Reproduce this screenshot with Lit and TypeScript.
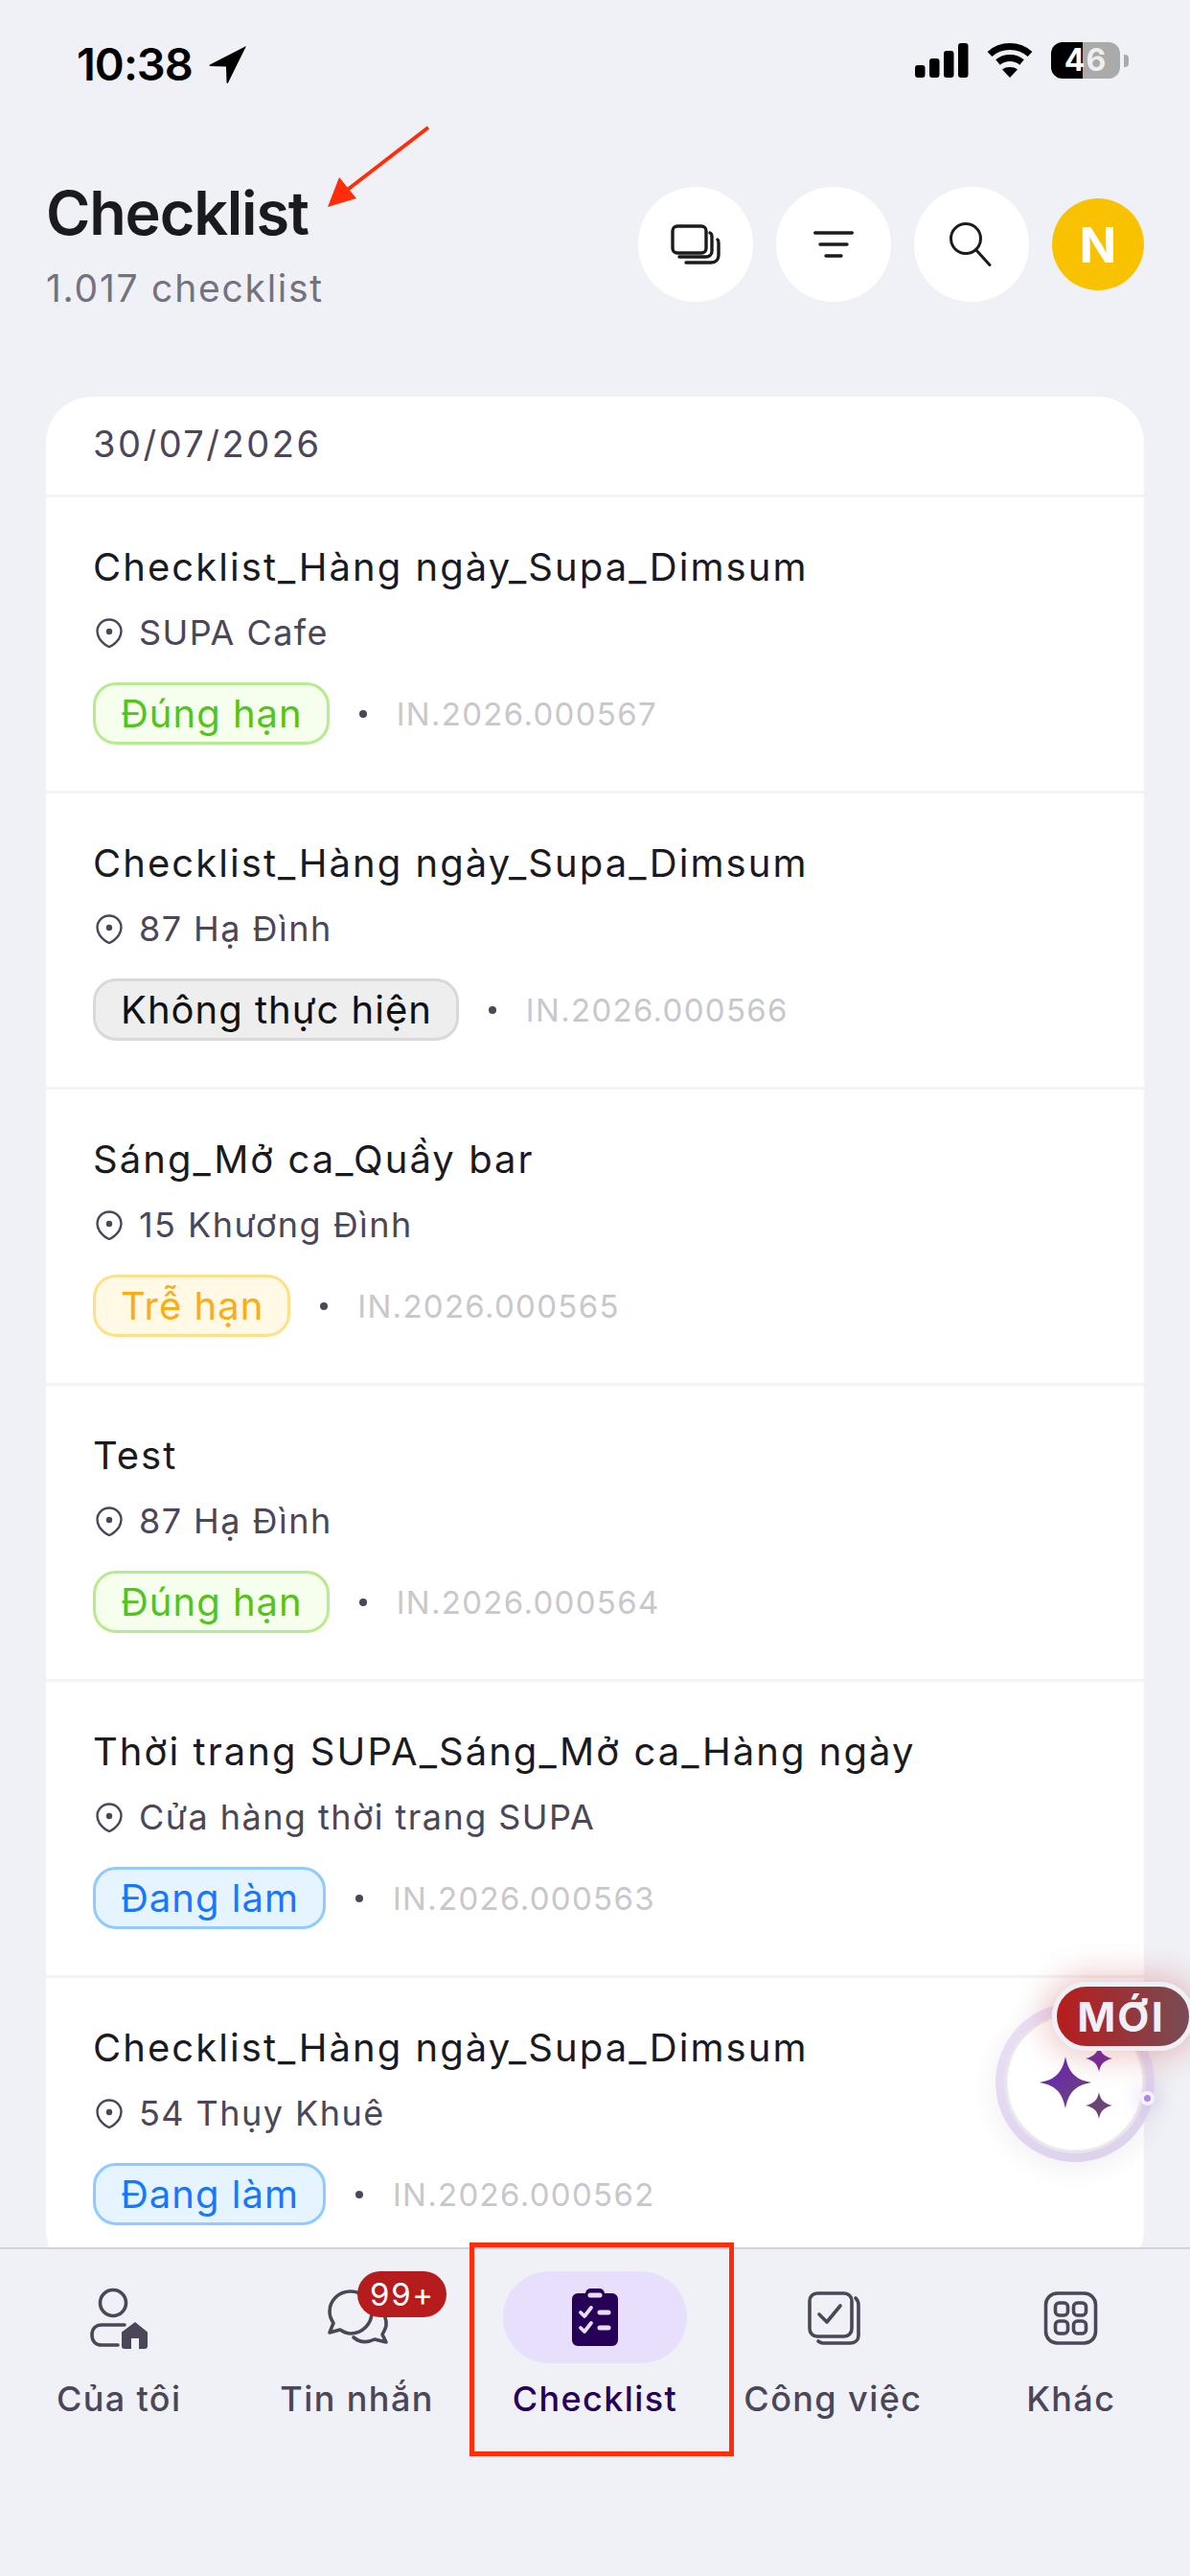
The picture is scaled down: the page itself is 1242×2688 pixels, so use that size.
import { LitElement, html, css, svg } from "lit";
import { customElement } from "lit/decorators.js";

type Row = { t: string; loc: string; tag: string; kind: string; code: string };
const rows: Row[] = [
  { t: "Checklist_Hàng ngày_Supa_Dimsum", loc: "SUPA Cafe", tag: "Đúng hạn", kind: "green", code: "IN.2026.000567" },
  { t: "Checklist_Hàng ngày_Supa_Dimsum", loc: "87 Hạ Đình", tag: "Không thực hiện", kind: "grey", code: "IN.2026.000566" },
  { t: "Sáng_Mở ca_Quầy bar", loc: "15 Khương Đình", tag: "Trễ hạn", kind: "yellow", code: "IN.2026.000565" },
  { t: "Test", loc: "87 Hạ Đình", tag: "Đúng hạn", kind: "green", code: "IN.2026.000564" },
  { t: "Thời trang SUPA_Sáng_Mở ca_Hàng ngày", loc: "Cửa hàng thời trang SUPA", tag: "Đang làm", kind: "blue", code: "IN.2026.000563" },
  { t: "Checklist_Hàng ngày_Supa_Dimsum", loc: "54 Thụy Khuê", tag: "Đang làm", kind: "blue", code: "IN.2026.000562" },
];

const pin = svg`<path d="M14 1.500C7 1.500 1.500 7 1.500 13.800c0 3 1 5.500 2.500 8 2.500 3.500 6 6.500 10 8.200 4-1.700 7.500-4.700 10-8.200 1.500-2.500 2.500-5 2.500-8C26.500 7 21 1.500 14 1.500Z" fill="none" stroke="#4b4658" stroke-width="2.400" stroke-linejoin="round"/><circle cx="14" cy="14" r="3.200" fill="#4b4658"/>`;

const tabs = [
  {
    label: "Của tôi",
    icon: svg`<g fill="none" stroke="#4b4658" stroke-width="3.600" stroke-linecap="round"><circle cx="42" cy="27" r="13.500"/><path d="M54 50H30c-6 0-10 4-10 10.500s4 10.500 10 10.500h17"/></g><path d="M65 47 51 57.500V72a3 3 0 0 0 3 3h7V64h8v11h6a3 3 0 0 0 3-3V57.500Z" fill="#4b4658"/>`,
  },
  {
    label: "Tin nhắn",
    icon: svg`<g fill="none" stroke="#4b4658" stroke-width="3.600" stroke-linecap="round" stroke-linejoin="round"><path d="M41 15c-12 0-22 9-22 21 0 5 2 9 4 12l-4 10 11-3c3 2 7 4 11 4 12 0 22-10 22-22s-10-22-22-22Z"/><path d="M70 32C76 38 79 44 78 51 77 55 75 58 74 60L78 68 66 65C58 69 50 68 44 63"/></g>`,
  },
  {
    label: "Checklist",
    active: true,
    icon: svg`<path fill="#270058" d="M38 17a6 6 0 0 1 6-5h8a6 6 0 0 1 6 5h8a6 6 0 0 1 6 6v43a6 6 0 0 1-6 6H30a6 6 0 0 1-6-6V23a6 6 0 0 1 6-6Z"/><g fill="none" stroke="#e8dffd" stroke-linecap="round" stroke-linejoin="round"><path d="M43 19h10" stroke-width="5"/><path d="M53 37h9M53 53h9" stroke-width="5"/><path d="M33 37l4 4 7-9M33 53l4 4 7-9" stroke-width="3.800"/></g>`,
  },
  {
    label: "Công việc",
    icon: svg`<g fill="none" stroke="#4b4658" stroke-linecap="round" stroke-linejoin="round" stroke-width="3.600"><rect x="24" y="17" width="44" height="45" rx="8"/><path d="M34 39l8 8 14-17"/><path d="M72 22c2 2 3 4 3 7v32c0 5-4 8-9 8H38c-2 0-3-.5-5-2"/></g>`,
  },
  {
    label: "Khác",
    icon: svg`<g fill="none" stroke="#4b4658" stroke-width="3.600" transform="translate(1.500 4)"><rect x="20" y="13" width="52" height="52" rx="12"/><rect x="30" y="23" width="13" height="13" rx="4"/><rect x="49" y="23" width="13" height="13" rx="4"/><rect x="30" y="42" width="13" height="13" rx="4"/><rect x="49" y="42" width="13" height="13" rx="4"/></g>`,
  },
];

@customElement("app-root")
export class AppRoot extends LitElement {
  static styles = css`
    :host {
      display: flex;
      flex-direction: column;
      position: relative;
      width: 1242px;
      height: 2688px;
      overflow: hidden;
      background: #f0f1f6;
      font-family: Inter, "Noto Sans", sans-serif;
      color: #1b1b1f;
    }
    .status {
      height: 195px;
      flex: none;
      box-sizing: border-box;
      padding: 44px 64px 0 80px;
      display: flex;
      justify-content: space-between;
      align-items: flex-start;
    }
    .time {
      display: flex;
      align-items: center;
      gap: 17px;
      font-size: 47px;
      font-weight: 600;
      line-height: 46px;
      color: #000;
      letter-spacing: -1px;
    }
    .sys {
      display: flex;
      align-items: center;
      gap: 19px;
    }
    .battery {
      position: relative;
      width: 72px;
      height: 38px;
      border-radius: 12px;
      overflow: hidden;
      background: linear-gradient(90deg, #000 0 46%, #aaaaaa 46% 100%);
      display: flex;
      align-items: center;
      justify-content: center;
      font-size: 32px;
      font-weight: 700;
      letter-spacing: 1px;
      line-height: 38px;
    }
    .battery .a { color: #fff; }
    .battery .b { color: #eeeeee; }
    .cap {
      width: 5px;
      height: 13px;
      margin-left: -15px;
      border-radius: 0 4px 4px 0;
      background: #aaaaaa;
    }
    header {
      flex: none;
      height: 219px;
      box-sizing: border-box;
      padding: 0 48px;
      display: flex;
      justify-content: space-between;
      align-items: flex-start;
    }
    h1 {
      margin: -3px 0 0;
      font-size: 63px;
      line-height: 60px;
      font-weight: 600;
      letter-spacing: -1.2px;
      color: #1b1b1f;
    }
    .sub {
      margin-top: 27px;
      font-size: 39px;
      line-height: 44px;
      color: #75727f;
      letter-spacing: 1.750px;
    }
    .actions {
      display: flex;
      align-items: center;
      gap: 24px;
    }
    .round {
      width: 120px;
      height: 120px;
      border-radius: 50%;
      background: #fff;
      display: flex;
      align-items: center;
      justify-content: center;
    }
    .avatar {
      width: 96px;
      height: 96px;
      border-radius: 50%;
      background: #f8c200;
      color: #fff;
      font-size: 51px;
      font-weight: 700;
      display: flex;
      align-items: center;
      justify-content: center;
    }
    main {
      flex: 1;
      min-height: 0;
      overflow: hidden;
      padding: 0 48px;
    }
    .card {
      background: #fff;
      border-radius: 48px;
    }
    .date {
      height: 105px;
      box-sizing: border-box;
      padding: 0 49px 4px;
      display: flex;
      align-items: center;
      font-size: 38px;
      letter-spacing: 2.500px;
      color: #4b4658;
      border-bottom: 3px solid #f3f3f7;
    }
    .row {
      box-sizing: border-box;
      height: 309px;
      padding: 45px 49px 0;
      border-bottom: 3px solid #f3f3f7;
      display: flex;
      flex-direction: column;
      align-items: flex-start;
    }
    .row:last-child { border-bottom: 0; height: 311px; }
    .title {
      font-size: 40px;
      line-height: 56px;
      letter-spacing: 2.050px;
      color: #1b1b1f;
    }
    .loc {
      margin-top: 16px;
      display: flex;
      align-items: center;
      gap: 17px;
      font-size: 36px;
      line-height: 48px;
      letter-spacing: 1.450px;
      color: #4b4658;
    }
    .loc svg { flex: none; margin-left: 3px; }
    .meta {
      margin-top: 28px;
      display: flex;
      align-items: center;
    }
    .tag {
      height: 65px;
      box-sizing: border-box;
      padding: 0 25px 0 26px;
      border-radius: 24px;
      border: 3px solid;
      display: flex;
      align-items: center;
      font-size: 40px;
      letter-spacing: 1px;
    }
    .green { color: #52c41a; background: #f6ffed; border-color: #b7eb8f; }
    .grey { color: #111111; background: #eeeeee; border-color: #d9d9d9; }
    .yellow { color: #faad14; background: #fff9e6; border-color: #ffe08a; }
    .blue { color: #1677ff; background: #e6f4ff; border-color: #91caff; }
    .dot {
      width: 8px;
      height: 8px;
      border-radius: 50%;
      background: #4b4658;
      margin: 0 31px;
    }
    .code {
      font-size: 33px;
      letter-spacing: 1.300px;
      color: #c8c8cc;
    }
    nav {
      flex: none;
      height: 343px;
      box-sizing: border-box;
      border-top: 2px solid #d5cfe0;
      display: grid;
      grid-template-columns: repeat(5, 248.4px);
      align-items: start;
    }
    .tab {
      display: flex;
      flex-direction: column;
      align-items: center;
      padding-top: 23px;
      color: #4b4658;
      font-size: 36px;
      font-weight: 500;
      letter-spacing: 1.400px;
      line-height: 48px;
      position: relative;
    }
    .ico {
      width: 192px;
      height: 96px;
      border-radius: 48px;
      display: flex;
      align-items: center;
      justify-content: center;
      margin-bottom: 13px;
    }
    .tab.on .ico { background: #e8dffd; }
    .tab.on { color: #270058; }
    .tab-label { white-space: nowrap; }
    .badge {
      position: absolute;
      top: 23px;
      left: 125px;
      width: 93px;
      height: 48px;
      border-radius: 24px;
      background: #b71c1c;
      color: #fff;
      font-size: 33px;
      font-weight: 400;
      letter-spacing: 1.600px;
      display: flex;
      align-items: center;
      justify-content: center;
    }
    .arrow {
      position: absolute;
      left: 330px;
      top: 125px;
    }
    .redbox {
      position: absolute;
      left: 490px;
      top: 2340px;
      width: 276px;
      height: 223px;
      box-sizing: border-box;
      border: 5px solid #ff2d0a;
    }
    .fab {
      position: absolute;
      left: 1039px;
      top: 2090px;
      width: 166px;
      height: 166px;
      border-radius: 50%;
      background: linear-gradient(160deg, #ebe1f8, #dcd0ea);
      box-shadow: 0 6px 28px rgba(60, 40, 90, 0.08);
      display: flex;
      align-items: center;
      justify-content: center;
    }
    .disk {
      width: 148px;
      height: 148px;
      box-sizing: border-box;
      border-radius: 50%;
      background: #fff;
      border: 3px solid #e8e6ea;
      box-shadow: inset 0 0 0 1px #f3f2f4;
      display: flex;
      align-items: center;
      justify-content: center;
    }
    .spark-dot {
      position: absolute;
      left: 151px;
      top: 92px;
      width: 7px;
      height: 7px;
      border: 4px solid #f6f4fb;
      border-radius: 50%;
      background: #b184ec;
      box-shadow: 0 0 18px 6px rgba(160, 120, 230, 0.18);
    }
    .new {
      position: absolute;
      left: 1098px;
      top: 2068px;
      width: 148px;
      height: 72px;
      box-sizing: border-box;
      border: 5px solid #eef0f5;
      border-radius: 36px;
      background: linear-gradient(90deg, #b71c1c, #784c55);
      box-shadow: 0 0 34px 6px rgba(190, 40, 40, 0.28);
      color: #eef0f5;
      font-size: 43px;
      font-weight: 700;
      letter-spacing: 2px;
      display: flex;
      align-items: center;
      justify-content: center;
      padding-right: 4px;
    }
  `;

  render() {
    return html`
      <div class="status">
        <div class="time">
          <span>10:38</span>
          <svg width="40" height="40" viewBox="0 0 40 40"><path d="M39 1 1 20.500c-.8.5-.5 1.500.4 1.500l16.600.5.5 16.500c0 1 1 1.200 1.500.4Z" fill="#000"/></svg>
        </div>
        <div class="sys">
          <svg width="56" height="36" viewBox="0 0 56 36" fill="#000"><rect x="0" y="23" width="10.500" height="13" rx="3"/><rect x="15" y="16" width="10.500" height="20" rx="3"/><rect x="30" y="8" width="10.500" height="28" rx="3"/><rect x="45" y="0" width="10.500" height="36" rx="3"/></svg>
          <svg width="48" height="36" viewBox="0 0 48 36" fill="none" stroke="#000" stroke-width="7"><path d="M3 11.500C9 6 16 3.500 24 3.500s15 2.500 21 8"/><path d="M11.500 20c3.500-3 7.500-4.500 12.500-4.500s9 1.500 12.500 4.500"/><path d="M24 36l-8-8.500c2-1.700 5-2.500 8-2.500s6 .8 8 2.500Z" fill="#000" stroke="none"/></svg>
          <div class="battery"><span class="a">4</span><span class="b">6</span></div>
          <div class="cap"></div>
        </div>
      </div>
      <header>
        <div>
          <h1>Checklist</h1>
          <div class="sub">1.017 checklist</div>
        </div>
        <div class="actions">
          <div class="round">
            <svg width="52" height="42" viewBox="0 0 52 42" fill="none" stroke="#1b1b1f" stroke-width="3.400" stroke-linecap="round"><rect x="2" y="2" width="35" height="28" rx="5"/><path d="M41 9c1.500.5 2 2 2 4v15c0 4-3 6-6 6H9"/><path d="M49 16c1 .8 1 2 1 4v12c0 5-3 8-8 8H16"/></svg>
          </div>
          <div class="round">
            <svg width="42" height="30" viewBox="0 0 42 30" stroke="#1b1b1f" stroke-width="3.400" stroke-linecap="round"><path d="M1.700 3h38.600M7 15h28M13 27h16"/></svg>
          </div>
          <div class="round">
            <svg width="46" height="46" viewBox="0 0 46 46" fill="none" stroke="#1b1b1f" stroke-width="3"><circle cx="17" cy="17" r="15.500"/><path d="M27.500 28.500 42 44.500" stroke-linecap="round"/></svg>
          </div>
          <div class="avatar">N</div>
        </div>
      </header>
      <main>
        <div class="card">
          <div class="date">30/07/2026</div>
          ${rows.map(
            (r) => html`<div class="row">
              <div class="title">${r.t}</div>
              <div class="loc">
                <svg width="28" height="31" viewBox="0 0 28 31">${pin}</svg>
                <span>${r.loc}</span>
              </div>
              <div class="meta">
                <div class="tag ${r.kind}">${r.tag}</div>
                <span class="dot"></span>
                <span class="code">${r.code}</span>
              </div>
            </div>`
          )}
        </div>
      </main>
      <nav>
        ${tabs.map(
          (t, i) => html`<div class="tab ${t.active ? "on" : ""}">
            <div class="ico">
              <svg width="96" height="84" viewBox="0 0 96 84">${t.icon}</svg>
            </div>
            <span class="tab-label">${t.label}</span>
            ${i === 1 ? html`<span class="badge">99+</span>` : ""}
          </div>`
        )}
      </nav>
      <svg class="arrow" width="130" height="100" viewBox="0 0 130 100">
        <path d="M117 8 30 75" stroke="#ff2d0a" stroke-width="4" fill="none"/>
        <path d="M12 91 24 60 42 82Z" fill="#ff2d0a"/>
      </svg>
      <div class="redbox"></div>
      <div class="fab">
        <div class="disk">
          <svg width="100" height="100" viewBox="0 0 100 100">
            <defs>
              <linearGradient id="sp" x1="0" y1="0" x2="1" y2="1">
                <stop offset="0" stop-color="#6a1fc4"/>
                <stop offset="1" stop-color="#6a4a70"/>
              </linearGradient>
            </defs>
            <path fill="url(#sp)" d="M40 23c3 15 9 24 27 27-18 3-24 12-27 27-3-15-9-24-27-27 18-3 24-12 27-27Z"/>
            <path fill="#6f2ea0" d="M75 11c1.500 8 5 12 14 14-9 2-12.500 6-14 14-1.500-8-5-12-14-14 9-2 12.500-6 14-14Z"/>
            <path fill="#694673" d="M75 60c1.500 8 5 12 14 14-9 2-12.500 6-14 14-1.500-8-5-12-14-14 9-2 12.500-6 14-14Z"/>
          </svg>
        </div>
        <span class="spark-dot"></span>
      </div>
      <div class="new">MỚI</div>
    `;
  }
}
